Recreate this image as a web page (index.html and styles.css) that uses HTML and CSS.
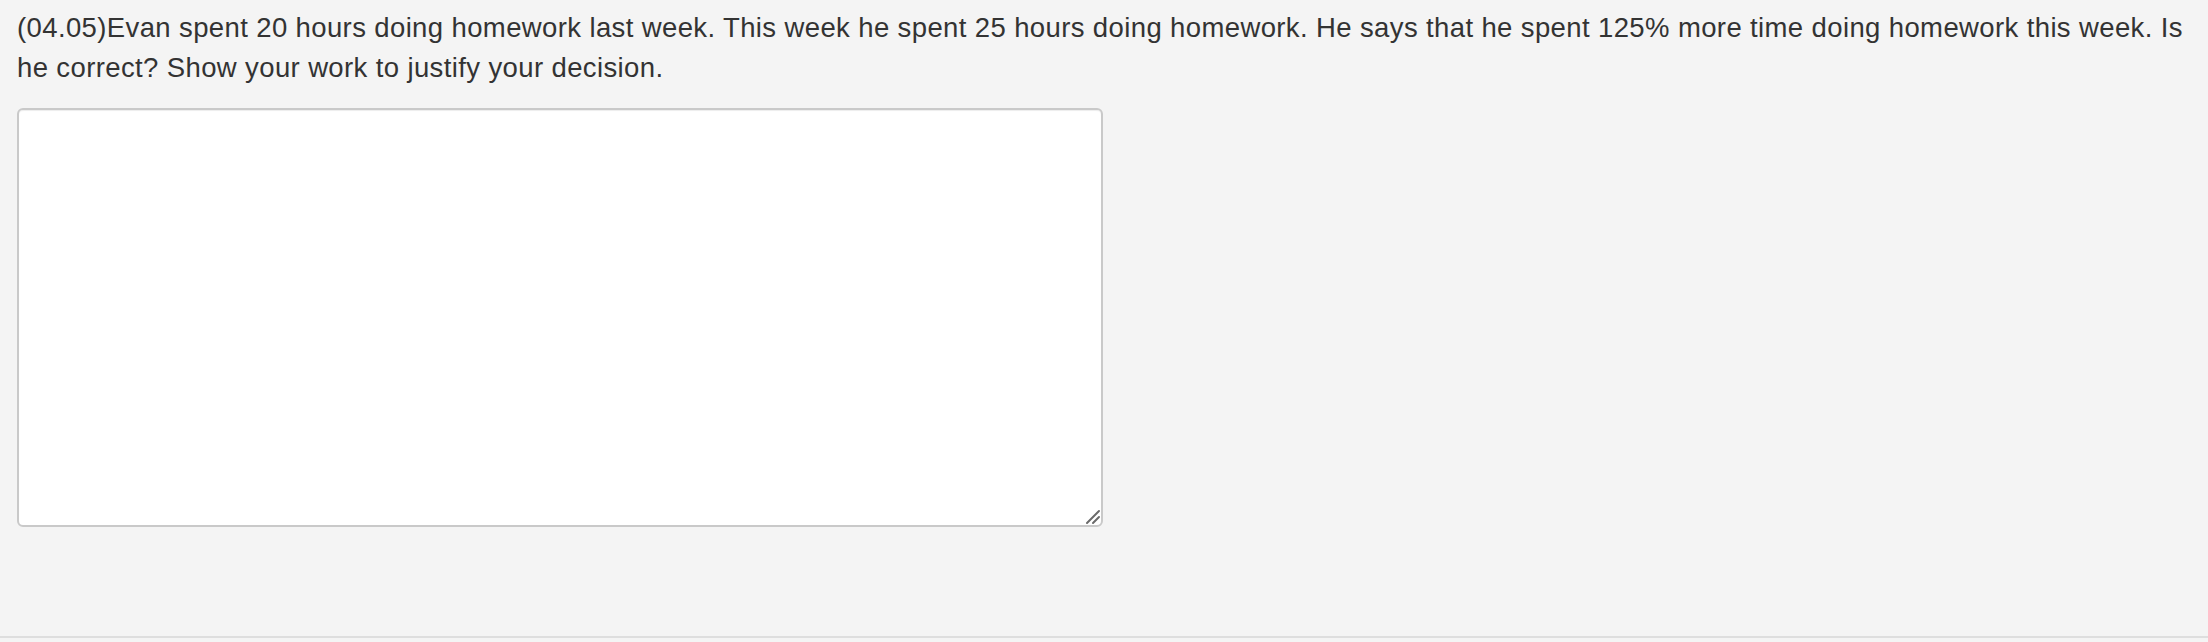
FILE: index.html
```html
<!DOCTYPE html>
<html>
<head>
<meta charset="utf-8">
<link rel="stylesheet" href="styles.css">
</head>
<body>
<div class="page">
  <div class="question">
    <p class="prompt">(04.05)Evan spent 20 hours doing homework last week. This week he spent 25 hours doing homework. He says that he spent 125% more time doing homework this week. Is he correct? Show your work to justify your decision.</p>
    <div class="answer-wrap">
      <textarea class="answer"></textarea>
      <svg class="grip" width="16" height="16" viewBox="0 0 16 16" aria-hidden="true">
        <line x1="2" y1="14" x2="14" y2="2" stroke="#6b6b6b" stroke-width="2" stroke-linecap="round"/>
        <line x1="8" y1="14" x2="14" y2="8" stroke="#6b6b6b" stroke-width="2" stroke-linecap="round"/>
      </svg>
    </div>
  </div>
</div>
</body>
</html>
```
FILE: styles.css
```css
html, body {
  margin: 0;
  padding: 0;
  background: #f4f4f4;
}
.page {
  height: 636px;
  border-bottom: 2px solid #dedede;
  box-sizing: content-box;
}
.question {
  padding: 8px 17px 0 17px;
  display: flex;
  flex-direction: column;
}
.prompt {
  margin: 0;
  font-family: "Liberation Sans", Arial, sans-serif;
  font-size: 27.5px;
  letter-spacing: 0.38px;
  line-height: 40px;
  color: #333333;
}
.answer-wrap {
  position: relative;
  margin-top: 20px;
  width: 1086px;
  height: 419px;
}
.answer {
  display: block;
  width: 1086px;
  height: 419px;
  box-sizing: border-box;
  background: #ffffff;
  border: 2px solid #c9c9c9;
  border-radius: 6px;
  box-shadow: inset 0 1px 1px rgba(0,0,0,0.075);
  resize: none;
  font-family: "Liberation Sans", Arial, sans-serif;
  font-size: 20px;
  padding: 8px 12px;
  outline: none;
  margin: 0;
}
.grip {
  position: absolute;
  right: 2px;
  bottom: 2px;
  pointer-events: none;
}
```
